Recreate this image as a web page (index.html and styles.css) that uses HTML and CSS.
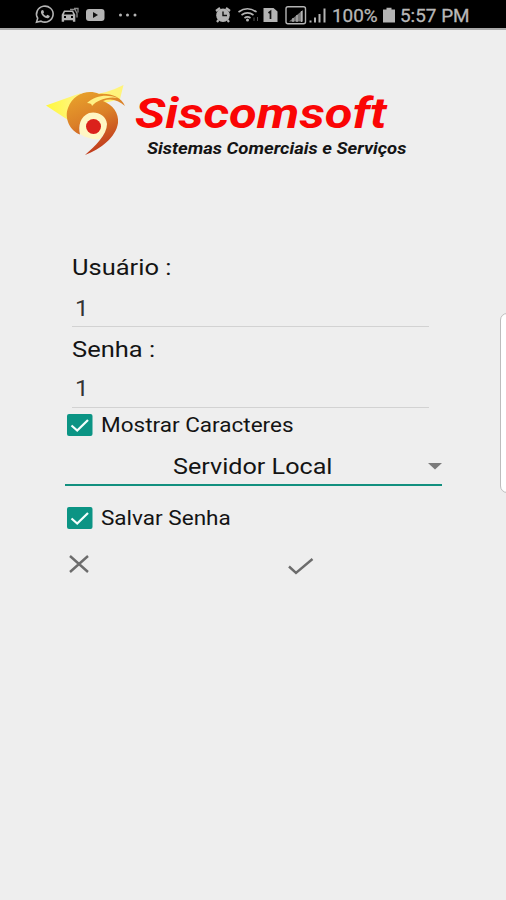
FILE: index.html
```html
<!DOCTYPE html>
<html lang="pt-BR">
<head>
<meta charset="utf-8">
<meta name="viewport" content="width=device-width">
<title>Siscomsoft</title>
<link rel="stylesheet" href="styles.css">
</head>
<body>
<header class="status">
  <svg class="status-icons" width="110" height="28" viewBox="0 0 110 28" fill="none" stroke="#b4b4b4">
    <path d="M3.5 22.2 4.7 18.2A8.3 8 0 1 1 8 21.2Z" stroke-width="1.6"/>
    <path d="M8.7 10.3c-1.6 1.6-.4 4.4 1.8 6.2 2 1.7 4.7 2.6 6 .5l.3-1.1-2.4-1.2-1.3 1.2c-1.4-.6-2.3-1.4-2.9-2.5l.9-1.2-1-2.2Z" fill="#b4b4b4" stroke="none"/>
    <path fill="#b4b4b4" stroke="none" fill-rule="evenodd" d="M31 10.5h9l2.3 4.3v7h-2.4v-1.6h-8.8v1.6h-2.4v-7Zm.9 1.5-1 2.6h9.3l-1-2.6Zm-.9 4.1v1.8h2v-1.8Zm7 0v1.8h2v-1.8Z"/>
    <path d="M37 9.500h5l2 4v4M41 8.500h4v4" stroke="#8a8a8a" stroke-width="1.300"/>
    <rect x="53" y="9" width="18.500" height="12" rx="3" fill="#b4b4b4" stroke="none"/>
    <path d="m60 12 5 3-5 3Z" fill="#111" stroke="none"/>
    <g fill="#b4b4b4" stroke="none"><circle cx="87.500" cy="15" r="1.500"/><circle cx="94.500" cy="15" r="1.500"/><circle cx="102" cy="15" r="1.500"/></g>
  </svg>
  <svg class="status-icons" width="114" height="28" viewBox="214 0 114 28" fill="none" stroke="#b4b4b4">
    <circle cx="223" cy="15.300" r="6.800" fill="#b4b4b4" stroke="none"/>
    <path d="m216 11 4-3M230 11l-4-3M218.500 20l-1.500 2M227.500 20l1.500 2" stroke-width="2.200"/>
    <path d="M223 11.500v4h4" stroke="#111" stroke-width="1.400"/>
    <path d="M238.500 12q9-6.500 18 0M241.500 15q6-4.200 12 0M244.500 18q3-2.200 6 0" stroke-width="1.600"/>
    <circle cx="247.500" cy="20" r="1.500" fill="#b4b4b4" stroke="none"/>
    <path d="M254 21v-3.500M257.500 17v4" stroke="#555"/>
    <path d="M263.500 8h10l4 3.500V22h-14Z" fill="#b4b4b4" stroke="none"/>
    <path d="m268.500 13 2-1.500V19" stroke="#111" stroke-width="1.700"/>
    <rect x="286" y="6.800" width="19.500" height="17" rx="2" stroke-width="1.400"/>
    <path d="M289 21.500 303 10v11.500Z" fill="#777" stroke="none"/>
    <path d="M293 22v-4M297 22v-7M301.500 22V11" stroke-width="1.300"/>
    <path d="M310.500 22.500v-2M315 22.500v-5M319.500 22.500V14M324.500 22.500V8.500" stroke-width="2"/>
  </svg>
  <span class="battery-level"><span class="wide">100%</span></span>
  <svg class="battery" width="12" height="28" viewBox="0 0 12 28"><path fill="#b4b4b4" d="M3.500 7.800h5v1.700H12V22.500H0V9.500h3.500Z"/></svg>
  <span class="clock"><span class="wide">5:57 PM</span></span>
</header>
<main>
  <section class="brand">
    <svg class="logo" width="80" height="72" viewBox="0 0 80 72">
      <defs>
        <linearGradient id="flame" x1="0" y1="0" x2=".4" y2="1"><stop offset="0" stop-color="#eaa62b"/><stop offset=".5" stop-color="#db8028"/><stop offset="1" stop-color="#c03a1d"/></linearGradient>
        <linearGradient id="ray" x1="0" x2="1"><stop offset="0" stop-color="#fff83c"/><stop offset="1" stop-color="#fff58c"/></linearGradient>
      </defs>
      <path d="M0 20.500 35 8 22 35Z" fill="url(#ray)"/>
      <path d="M43 10C54 9 66 6 77.500 0L74 14 47 21Z" fill="#fff47a"/>
      <path d="M34 49C32 35 38 25 48 25 60 25 64 37 60 46L54 54C48 55 40 53 34 49Z" fill="#fff6c4"/>
      <path d="M34 49.500C24 46 18 33 22 23 27 9 42 4 53 9 65 8 75 12 79 21 72 15 65 13 57 16 67 20 73 28 72 38 70 52 55 64 39 70 49 61 61 50 61 39 60 30 51 26 43 28 34 32 32 41 34 49.500Z" fill="url(#flame)"/>
      <path d="M41 18C50 10 61 9 72 13 62 11 51 15 46 21 46 19 44 18 41 18Z" fill="#fff184"/>
      <circle cx="47.500" cy="41.500" r="7.500" fill="#db211b"/>
    </svg>
    <div class="brand-text">
      <h1><span class="wide">Siscomsoft</span></h1>
      <p><span class="wide">Sistemas Comerciais e Serviços</span></p>
    </div>
  </section>
  <form class="login">
    <div class="label user"><span class="wide">Usuário :</span></div>
    <div class="field"><span class="wide">1</span></div>
    <div class="label pass"><span class="wide">Senha :</span></div>
    <div class="field second"><span class="wide">1</span></div>
    <div class="check show">
      <svg width="26" height="22" viewBox="0 0 26 22"><rect width="25.500" height="22" rx="2" fill="#0b9484"/><path d="m4.500 11.500 5.700 5L21 6" fill="none" stroke="#f3fffd" stroke-width="2.200"/></svg>
      <span class="wide">Mostrar Caracteres</span>
    </div>
    <div class="select">
      <span class="wide">Servidor Local</span>
      <svg class="arrow" width="14" height="7" viewBox="0 0 14 7"><path d="M0 0h14L7 6.500Z" fill="#7b7b7b"/></svg>
    </div>
    <div class="check save">
      <svg width="26" height="22" viewBox="0 0 26 22"><rect width="25.500" height="22" rx="2" fill="#0b9484"/><path d="m4.500 11.500 5.700 5L21 6" fill="none" stroke="#f3fffd" stroke-width="2.200"/></svg>
      <span class="wide">Salvar Senha</span>
    </div>
    <div class="actions">
      <svg width="20" height="18" viewBox="0 0 20 18"><path d="m1 1 18 16M19 1 1 17" stroke="#6c6c6c" stroke-width="2.400"/></svg>
      <svg class="ok" width="26" height="18" viewBox="0 0 26 18"><path d="m1 9.500 7 6.500L24.500 2" fill="none" stroke="#6c6c6c" stroke-width="2.400"/></svg>
    </div>
  </form>
</main>
<aside class="edge-handle"></aside>
</body>
</html>
```
FILE: styles.css
```css
* { box-sizing: border-box; }
body {
  margin: 0;
  height: 900px;
  overflow: hidden;
  background: #eee;
  color: #141414;
  font-family: Roboto, sans-serif;
}
h1, p { margin: 0; }
.wide {
  display: inline-block;
  white-space: nowrap;
  transform: scaleX(1.2);
  transform-origin: left center;
}
.status {
  display: flex;
  height: 30px;
  padding: 1px 0 0 33px;
  background: #000;
  border-bottom: 2px solid #aaa;
  color: #b8b8b8;
  font-size: 18px;
  line-height: 29px;
}
.status-icons { flex: none; margin-top: -1px; }
.status-icons + .status-icons { margin-left: 71px; }
.battery-level { width: 55px; padding-left: 4px; }
.battery { margin: -1px 0 0 0; }
.clock { padding-left: 5px; }
.status .wide { transform: scaleX(1.05); -webkit-text-stroke: .3px #b8b8b8; }
.brand {
  display: flex;
  height: 128px;
  padding: 55px 0 0 46px;
}
.logo { flex: none; }
.brand-text { padding: 2px 0 0 9px; }
h1 {
  height: 53px;
  color: #fa0505;
  font-size: 43px;
  font-style: italic;
  font-weight: 700;
  line-height: 53px;
}
h1 .wide { transform: scaleX(1.178); }
.brand-text p {
  padding-left: 12px;
  font-size: 16px;
  font-style: italic;
  font-weight: 700;
  line-height: 18px;
}
.brand-text p .wide { transform: scaleX(1.155); }
.login { padding: 95px 64px 0 65px; }
.label {
  height: 30px;
  padding-left: 7px;
  font-size: 21.5px;
  line-height: 30px;
}
.label .wide { transform: scaleX(1.185); }
.field {
  height: 44px;
  margin: 0 13px 0 7px;
  padding-left: 3px;
  border-bottom: 1px solid #d2d2d2;
  color: #333;
  font-size: 22px;
  line-height: 51px;
}
.field .wide { transform: scaleX(1.1); }
.pass { margin-top: 8px; }
.field.second { height: 43px; line-height: 48px; }
.check {
  display: flex;
  gap: 8px;
  padding-left: 2px;
  height: 22px;
  font-size: 19.5px;
  line-height: 24px;
}
.check .wide { transform: scaleX(1.155); }
.show { margin-top: 6px; }
.select {
  display: flex;
  justify-content: space-between;
  align-items: center;
  height: 39px;
  margin-top: 11px;
  padding: 2px 0 0 108px;
  border-bottom: 2px solid #12907f;
  font-size: 21.5px;
}
.select .wide { transform: scaleX(1.17); }
.save { margin-top: 21px; line-height: 23px; }
.actions { display: flex; padding: 26px 0 0 4px; }
.ok { margin: 2px 0 0 199px; }
.edge-handle {
  position: absolute;
  top: 313px;
  right: -12px;
  width: 18px;
  height: 180px;
  border: 1px solid #bdbdbd;
  border-radius: 7px;
  background: #fff;
}
```
